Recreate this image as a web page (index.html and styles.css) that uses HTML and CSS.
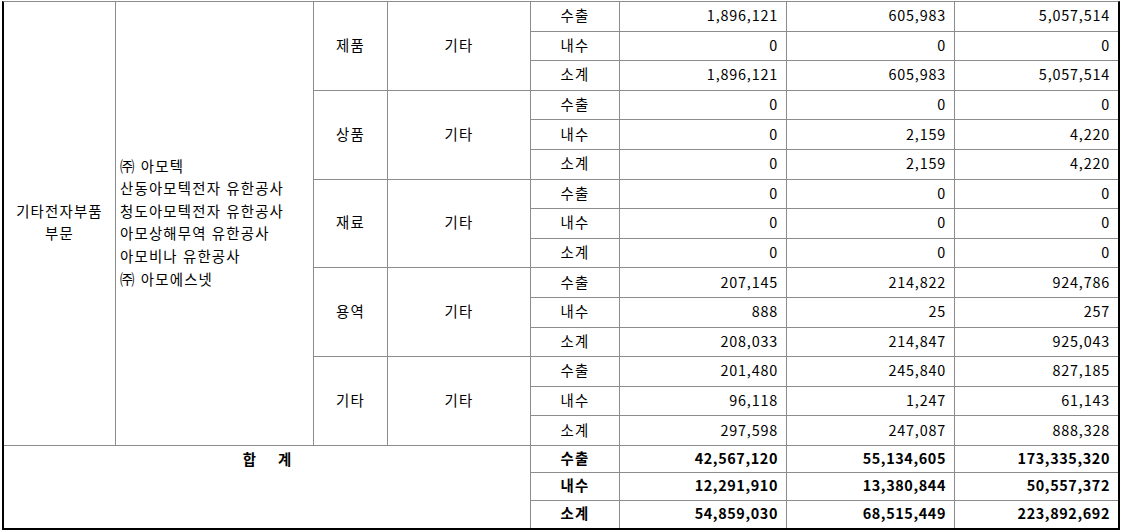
FILE: index.html
```html
<!DOCTYPE html>
<html lang="ko">
<head>
<meta charset="utf-8">
<title>매출 현황</title>
<link rel="stylesheet" href="styles.css">
</head>
<body>
<div class="wrap">
<table class="sales">
  <colgroup>
    <col class="c1"><col class="c2"><col class="c3"><col class="c4"><col class="c5"><col class="c6"><col class="c7"><col class="c8">
  </colgroup>
  <tbody>
    <tr class="r">
      <td rowspan="15" class="ctr">기타전자부품<br>부문</td>
      <td rowspan="15" class="co">㈜ 아모텍<br>산동아모텍전자 유한공사<br>청도아모텍전자 유한공사<br>아모상해무역 유한공사<br>아모비나 유한공사<br>㈜ 아모에스넷</td>
      <td rowspan="3" class="ctr">제품</td>
      <td rowspan="3" class="ctr">기타</td>
      <td class="ctr">수출</td><td class="num">1,896,121</td><td class="num">605,983</td><td class="num last">5,057,514</td>
    </tr>
    <tr class="r"><td class="ctr">내수</td><td class="num">0</td><td class="num">0</td><td class="num last">0</td></tr>
    <tr class="r"><td class="ctr">소계</td><td class="num">1,896,121</td><td class="num">605,983</td><td class="num last">5,057,514</td></tr>

    <tr class="r">
      <td rowspan="3" class="ctr">상품</td>
      <td rowspan="3" class="ctr">기타</td>
      <td class="ctr">수출</td><td class="num">0</td><td class="num">0</td><td class="num last">0</td>
    </tr>
    <tr class="r"><td class="ctr">내수</td><td class="num">0</td><td class="num">2,159</td><td class="num last">4,220</td></tr>
    <tr class="r"><td class="ctr">소계</td><td class="num">0</td><td class="num">2,159</td><td class="num last">4,220</td></tr>

    <tr class="r">
      <td rowspan="3" class="ctr">재료</td>
      <td rowspan="3" class="ctr">기타</td>
      <td class="ctr">수출</td><td class="num">0</td><td class="num">0</td><td class="num last">0</td>
    </tr>
    <tr class="r"><td class="ctr">내수</td><td class="num">0</td><td class="num">0</td><td class="num last">0</td></tr>
    <tr class="r"><td class="ctr">소계</td><td class="num">0</td><td class="num">0</td><td class="num last">0</td></tr>

    <tr class="r">
      <td rowspan="3" class="ctr">용역</td>
      <td rowspan="3" class="ctr">기타</td>
      <td class="ctr">수출</td><td class="num">207,145</td><td class="num">214,822</td><td class="num last">924,786</td>
    </tr>
    <tr class="r"><td class="ctr">내수</td><td class="num">888</td><td class="num">25</td><td class="num last">257</td></tr>
    <tr class="r"><td class="ctr">소계</td><td class="num">208,033</td><td class="num">214,847</td><td class="num last">925,043</td></tr>

    <tr class="r">
      <td rowspan="3" class="ctr">기타</td>
      <td rowspan="3" class="ctr">기타</td>
      <td class="ctr">수출</td><td class="num">201,480</td><td class="num">245,840</td><td class="num last">827,185</td>
    </tr>
    <tr class="r"><td class="ctr">내수</td><td class="num">96,118</td><td class="num">1,247</td><td class="num last">61,143</td></tr>
    <tr class="r"><td class="ctr">소계</td><td class="num">297,598</td><td class="num">247,087</td><td class="num last">888,328</td></tr>

    <tr class="t t1">
      <td colspan="4" rowspan="3" class="total end">합 계</td>
      <td class="ctr b">수출</td><td class="num b">42,567,120</td><td class="num b">55,134,605</td><td class="num b last">173,335,320</td>
    </tr>
    <tr class="t t2"><td class="ctr b">내수</td><td class="num b">12,291,910</td><td class="num b">13,380,844</td><td class="num b last">50,557,372</td></tr>
    <tr class="t t3"><td class="ctr b end">소계</td><td class="num b end">54,859,030</td><td class="num b end">68,515,449</td><td class="num b last end">223,892,692</td></tr>
  </tbody>
</table>
</div>
</body>
</html>
```
FILE: styles.css
```css
html, body {
  margin: 0;
  padding: 0;
  background: #ffffff;
}

.wrap {
  padding: 1px 0 0 2px;
}

.sales {
  border-collapse: separate;
  border-spacing: 0;
  table-layout: fixed;
  width: 1118px;
  border-top: 1px solid #8c8c8c;
  border-left: 2px solid #000000;
  border-right: 2px solid #000000;
  border-bottom: 2px solid #000000;
  font-family: "Noto Sans CJK KR", "Noto Sans", sans-serif;
  font-size: 14.4px;
  color: #000000;
}

.c1 { width: 112px; }
.c2 { width: 198px; }
.c3 { width: 74px; }
.c4 { width: 143px; }
.c5 { width: 89px; }
.c6 { width: 167px; }
.c7 { width: 168px; }
.c8 { width: 163px; }

.sales td {
  border-right: 1px solid #8c8c8c;
  border-bottom: 1px solid #8c8c8c;
  padding: 0 8px 2px 8px;
  line-height: 22px;
  white-space: nowrap;
  overflow: hidden;
}

.sales td.last { border-right: none; }
.sales td.end { border-bottom: none; }

.r { height: 29.6px; }
.t1 { height: 27px; }
.t2 { height: 28px; }
.t3 { height: 27px; }

.ctr {
  text-align: center;
  vertical-align: middle;
  letter-spacing: 1.2px;
}

.co {
  text-align: left;
  vertical-align: middle;
  padding-left: 4px !important;
  line-height: 22.6px !important;
  letter-spacing: 1.2px;
}

.num {
  text-align: right;
  vertical-align: middle;
  letter-spacing: 0.8px;
}

.b {
  font-weight: 700;
}

.num.b {
  letter-spacing: 0.6px;
}

.total {
  text-align: center;
  vertical-align: top;
  font-weight: 700;
  word-spacing: 18px;
  padding-top: 2px !important;
}
```
